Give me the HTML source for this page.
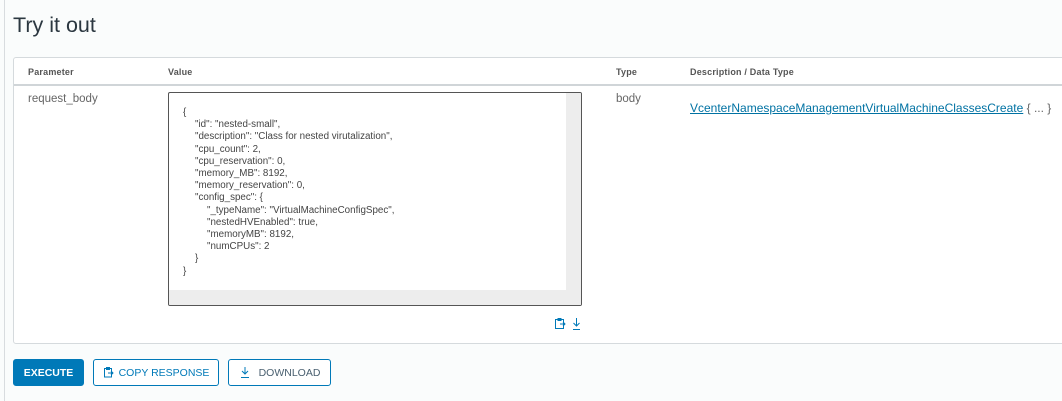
<!DOCTYPE html>
<html><head><style>
body{margin:0;width:1062px;height:401px;background:#fafcfc;font-family:"Liberation Sans",sans-serif;position:relative;overflow:hidden}
.lb{position:absolute;left:4px;top:0;width:1px;height:401px;background:#d8dcdf}
h1{position:absolute;left:13px;top:13px;margin:0;font-size:21.5px;font-weight:normal;color:#2b3740}
.tbl{position:absolute;left:13px;top:57px;width:1060px;height:285px;background:#fff;border:1px solid #d5dadd;border-radius:3px}
.hd{position:absolute;top:0;left:0;right:0;height:26px;border-bottom:2px solid #d0d5d8}
.th{position:absolute;top:9px;font-size:9px;color:#555;font-weight:bold;letter-spacing:.2px}
.td{position:absolute;font-size:11.5px;color:#666}
.ta{position:absolute;left:154px;top:34px;width:412px;height:212px;border:1px solid #555;border-radius:2px;background:#fff;overflow:hidden}
.sb{position:absolute;right:0;top:0;width:15px;height:100%;background:#ededed}
.bb{position:absolute;left:0;bottom:0;right:0;height:15px;background:#ededed}
.code{position:absolute;left:14px;top:14px;font-size:9.8px;line-height:12.2px;color:#444;white-space:nowrap}
.i1{padding-left:12px}.i2{padding-left:24px}
a{color:#0072a3}
.btn{position:absolute;top:359px;height:27px;border:1px solid #0079b8;border-radius:3px;font-size:10.5px;line-height:27px;color:#0079b8;text-align:center;box-sizing:border-box;background:#fff}
</style></head><body>
<div class="lb"></div>
<h1>Try it out</h1>
<div class="tbl">
<div class="hd"><span class="th" style="left:14px">Parameter</span><span class="th" style="left:154px">Value</span><span class="th" style="left:602px">Type</span><span class="th" style="left:676px">Description / Data Type</span></div>
<div class="td" style="left:14px;top:35px">request_body</div>
<div class="td" style="left:602px;top:35px">body</div>
<div class="td" style="left:676px;top:43px;font-size:12px"><a href="#">VcenterNamespaceManagementVirtualMachineClassesCreate</a> { ... }</div>
<div class="ta"><div class="sb"></div><div class="bb"></div>
<div class="code"><div>{</div>
<div class="i1">"id": "nested-small",</div>
<div class="i1">"description": "Class for nested virutalization",</div>
<div class="i1">"cpu_count": 2,</div>
<div class="i1">"cpu_reservation": 0,</div>
<div class="i1">"memory_MB": 8192,</div>
<div class="i1">"memory_reservation": 0,</div>
<div class="i1">"config_spec": {</div>
<div class="i2">"_typeName": "VirtualMachineConfigSpec",</div>
<div class="i2">"nestedHVEnabled": true,</div>
<div class="i2">"memoryMB": 8192,</div>
<div class="i2">"numCPUs": 2</div>
<div class="i1">}</div>
<div>}</div></div></div>
<svg style="position:absolute;left:540px;top:259px" width="30" height="14"><g fill="none" stroke="#0079b8" stroke-width="1"><rect x="1.5" y="2.5" width="8" height="9"/><path d="M4 1.5h3v2h-3zM6 7h5M9 5l2 2-2 2"/><path d="M22.5 1v8M19.5 6l3 3 3-3M19 12.5h7"/></g></svg>
</div>
<div class="btn" style="left:13px;width:71px;background:#0079b8;color:#fff;font-weight:bold">EXECUTE</div>
<div class="btn" style="left:93px;width:126px"><svg width="12" height="12" style="vertical-align:-2px;margin-right:4px"><g fill="none" stroke="#0079b8"><rect x="1.5" y="2.5" width="7" height="8.5"/><path d="M3.5 1.5h3v2h-3zM5 7h5M8 5l2 2-2 2"/></g></svg>COPY RESPONSE</div>
<div class="btn" style="left:228px;width:103px;color:#4a6070"><svg width="12" height="12" style="vertical-align:-2px;margin-right:8px"><g fill="none" stroke="#0079b8"><path d="M6 1v7M3 5l3 3 3-3M2 11.5h8"/></g></svg>DOWNLOAD</div>
</body></html>
